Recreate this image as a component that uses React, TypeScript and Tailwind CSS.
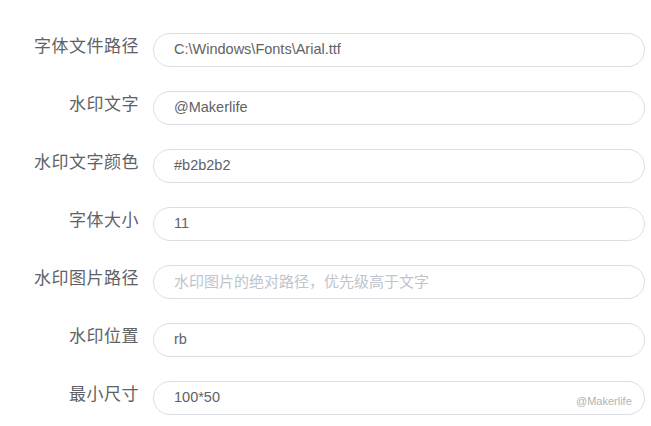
import React from "react";

const rows: { label: string; value?: string; placeholder?: string }[] = [
  { label: "字体文件路径", value: "C:\\Windows\\Fonts\\Arial.ttf" },
  { label: "水印文字", value: "@Makerlife" },
  { label: "水印文字颜色", value: "#b2b2b2" },
  { label: "字体大小", value: "11" },
  { label: "水印图片路径", placeholder: "水印图片的绝对路径，优先级高于文字" },
  { label: "水印位置", value: "rb" },
  { label: "最小尺寸", value: "100*50" },
];

export default function App() {
  return (
    <div
      className="relative w-[651px] h-[426px] bg-white pt-[33px]"
      style={{ fontFamily: '"Liberation Sans", "Noto Sans CJK SC", sans-serif' }}
    >
      <div className="flex flex-col gap-[24px]">
        {rows.map((r) => (
          <div key={r.label} className="flex items-start">
            <div className="w-[139px] shrink-0 text-right text-[17px] leading-[20px] pt-[4px] tracking-[0.5px] text-[#606266]">
              {r.label}
            </div>
            <div className="ml-[14px] w-[492px] h-[34px] rounded-full border border-[#dcdfe6] flex items-center pl-[20px]">
              {r.value ? (
                <span className="text-[14.5px] text-[#606266]">{r.value}</span>
              ) : (
                <span className="text-[15px] text-[#c0c4cc]">{r.placeholder}</span>
              )}
            </div>
          </div>
        ))}
      </div>
      <div className="absolute left-[576px] top-[393px] text-[11px] text-[#b2b2b2]">@Makerlife</div>
    </div>
  );
}
